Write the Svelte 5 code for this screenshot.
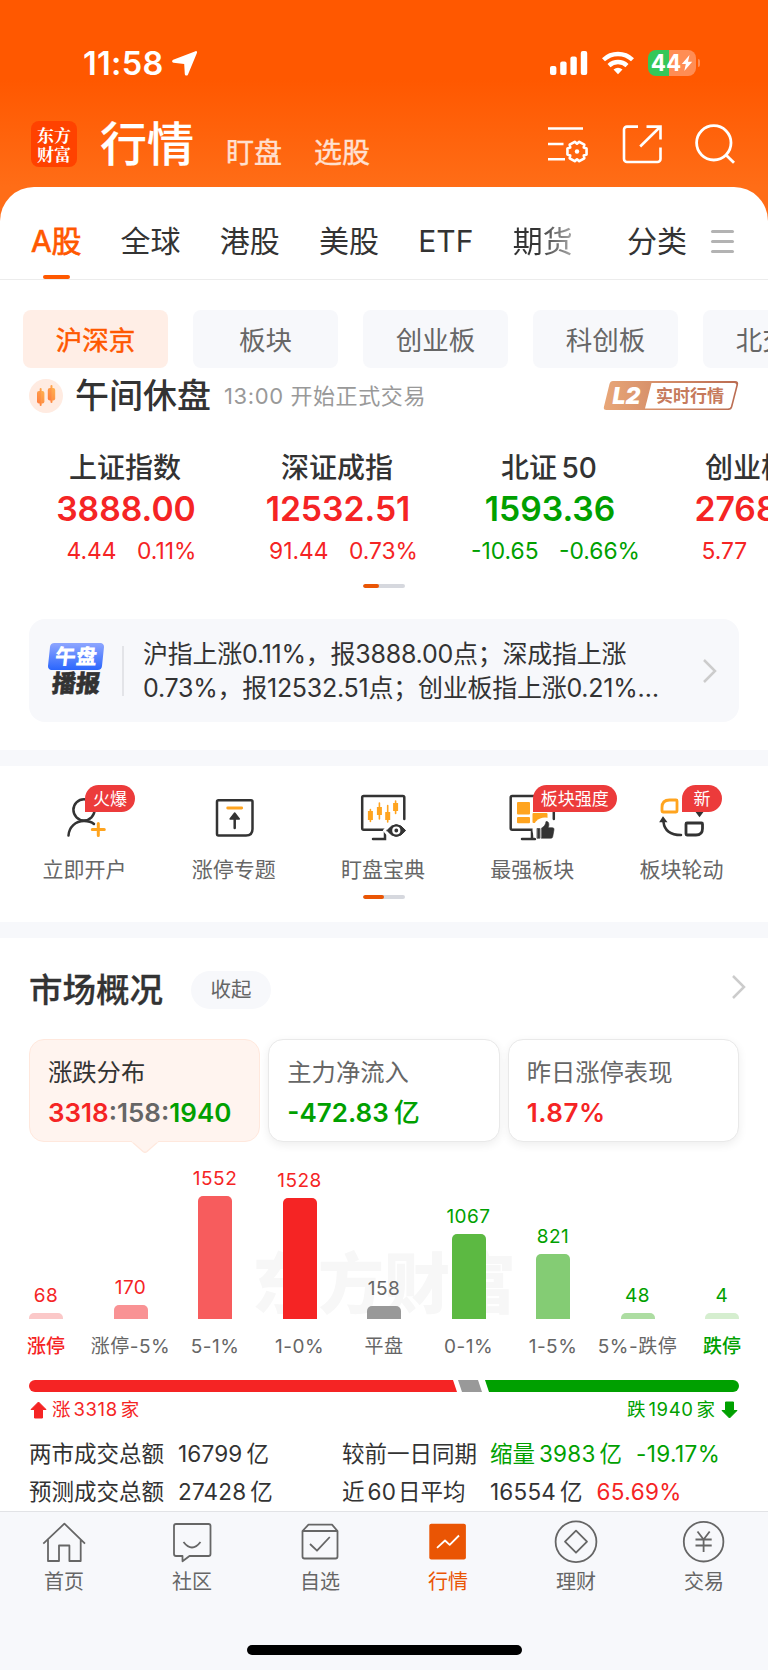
<script lang="ts">
    type Trend = 'up' | 'down' | 'flat'

    const markets = ['A股', '全球', '港股', '美股', 'ETF', '期货']
    const boards = ['沪深京', '板块', '创业板', '科创板', '北交所']

    const indices: { name: string; value: string; diff: string; rate: string; trend: Trend }[] = [
        { name: '上证指数', value: '3888.00', diff: '4.44', rate: '0.11%', trend: 'up' },
        { name: '深证成指', value: '12532.51', diff: '91.44', rate: '0.73%', trend: 'up' },
        { name: '北证 50', value: '1593.36', diff: '-10.65', rate: '-0.66%', trend: 'down' },
        { name: '创业板指', value: '2768.33', diff: '5.77', rate: '0.21%', trend: 'up' }
    ]

    const shortcuts = [
        { id: 'account', label: '立即开户', badge: '火爆' },
        { id: 'limit', label: '涨停专题', badge: '' },
        { id: 'watch', label: '盯盘宝典', badge: '' },
        { id: 'strong', label: '最强板块', badge: '板块强度' },
        { id: 'rotate', label: '板块轮动', badge: '新' }
    ]

    const bars = [
        { label: '涨停', count: 68, height: 6, color: '#fbc8c8', trend: 'up', edge: true },
        { label: '涨停-5%', count: 170, height: 14, color: '#f99294', trend: 'up' },
        { label: '5-1%', count: 1552, height: 123, color: '#f75c5d', trend: 'up' },
        { label: '1-0%', count: 1528, height: 121, color: '#f52424', trend: 'up' },
        { label: '平盘', count: 158, height: 13, color: '#999999', trend: 'flat' },
        { label: '0-1%', count: 1067, height: 85, color: '#5cb942', trend: 'down' },
        { label: '1-5%', count: 821, height: 65, color: '#84cc74', trend: 'down' },
        { label: '5%-跌停', count: 48, height: 6, color: '#addda2', trend: 'down' },
        { label: '跌停', count: 4, height: 6, color: '#d5eecf', trend: 'down', edge: true }
    ]

    const tabs = [
        { id: 'home', label: '首页' },
        { id: 'community', label: '社区' },
        { id: 'favorites', label: '自选' },
        { id: 'quotes', label: '行情' },
        { id: 'wealth', label: '理财' },
        { id: 'trade', label: '交易' }
    ]

    let market = $state('A股')
    let board = $state('沪深京')
    let tab = $state('quotes')

    // six-lobed outline around (cx, cy)
    function gear(cx: number, cy: number) {
        const at = (deg: number, r: number) => {
            const a = (deg * Math.PI) / 180
            return `${(cx + r * Math.cos(a)).toFixed(2)} ${(cy + r * Math.sin(a)).toFixed(2)}`
        }
        const points = []
        for (let mid = 0; mid < 360; mid += 60) {
            points.push(at(mid - 17, 10), at(mid + 17, 10), at(mid + 30, 7.8))
        }
        return `M${points.join('L')}Z`
    }
</script>

<div class="app">
    <div class="status">
        <div class="clock">
            <span>11:58</span>
            <svg width="27" height="27" viewBox="0 0 27 27"><path d="M24.5 1.2c1-.4 1.9.5 1.5 1.5L17 24.4c-.7 1.7-3 1.6-3.2-.3L13.2 14 2.5 12.8c-1.7-.2-1.9-2.4-.3-3z" fill="#fff" /></svg>
        </div>
        <div class="signals">
            <svg width="38" height="24" viewBox="0 0 38 24" fill="#fff">
                <rect x="0" y="15" width="6.4" height="9" rx="2" />
                <rect x="10.2" y="10.5" width="6.4" height="13.5" rx="2" />
                <rect x="20.4" y="5.5" width="6.4" height="18.5" rx="2" />
                <rect x="30.8" y="0" width="6.4" height="24" rx="2" />
            </svg>
            <svg class="wifi" width="32" height="24" viewBox="0 0 32 24" fill="none" stroke="#fff" stroke-width="4.3">
                <path d="M1.5 8.8a21 21 0 0 1 29 0" />
                <path d="M7 14.6a13 13 0 0 1 18 0" />
                <path d="M11.5 18.4q4.5-3.4 9 0L16 23.2z" fill="#fff" stroke="none" />
            </svg>
            <div class="battery">
                <span>44</span>
                <svg width="12" height="18" viewBox="0 0 12 18"><path d="M8.5 1 .8 10h4L3.3 17 11.2 7.7h-4.2z" fill="#fff" /></svg>
            </div>
            <div class="nub"></div>
        </div>
    </div>

    <header class="nav">
        <div class="logo"><span>东方</span><span>财富</span></div>
        <h1>行情</h1>
        <span class="sub">盯盘</span>
        <span class="sub">选股</span>
        <div class="nav-icons">
            <svg width="42" height="40" viewBox="0 0 42 40" fill="none" stroke="#fff" stroke-width="2.6">
                <path d="M1 4.5h35M1 20h15.5M1 35.2h17" />
                <path d={gear(30, 27.5)} stroke-linejoin="round" />
                <circle cx="30" cy="27.5" r="2.2" fill="#fff" stroke="none" />
            </svg>
            <svg width="40" height="40" viewBox="0 0 40 40" fill="none" stroke="#fff" stroke-width="2.6">
                <path d="M16 2.6H5a3 3 0 0 0-3 3V35a3 3 0 0 0 3 3h30.5a3 3 0 0 0 3-3V23.5M24.5 2.6h14v13M38 3 18.2 22.5" />
            </svg>
            <svg width="40" height="40" viewBox="0 0 40 40" fill="none" stroke="#fff" stroke-width="2.8">
                <circle cx="18.8" cy="18.8" r="17.2" />
                <path d="m30.5 30.5 8.5 8.3" />
            </svg>
        </div>
    </header>

    <main class="sheet">
        <nav class="markets">
            {#each markets as name}
                <button class="market" class:active={market === name} class:fading={name === '期货'} onclick={() => (market = name)}>{name}</button>
            {/each}
            <button class="market all">分类</button>
            <div class="burger"><i></i><i></i><i></i></div>
        </nav>

        <div class="boards">
            {#each boards as name}
                <button class="board" class:active={board === name} onclick={() => (board = name)}>{name}</button>
            {/each}
        </div>

        <div class="session">
            <svg width="34" height="34" viewBox="0 0 34 34">
                <defs>
                    <linearGradient id="candle" x1="0" y1="1" x2="1" y2="0">
                        <stop offset="0" stop-color="#ff7a3d" />
                        <stop offset="1" stop-color="#ffb350" />
                    </linearGradient>
                </defs>
                <circle cx="17" cy="17" r="17" fill="#ffebe1" />
                <g fill="url(#candle)">
                    <rect x="8" y="12" width="7.4" height="12.5" rx="2" />
                    <rect x="10.7" y="9" width="2" height="18" rx="1" />
                    <rect x="18.8" y="9" width="7.4" height="12.5" rx="2" />
                    <rect x="21.5" y="6" width="2" height="18" rx="1" />
                </g>
            </svg>
            <h2>午间休盘</h2>
            <span class="hint">13:00 开始正式交易</span>
            <svg class="level2" width="136" height="31" viewBox="0 0 136 31">
                <defs>
                    <linearGradient id="copper">
                        <stop offset="0" stop-color="#e8a678" />
                        <stop offset="1" stop-color="#ba6c52" />
                    </linearGradient>
                </defs>
                <path d="M10 1h122q4 0 3 4l-5.5 21.5q-.8 3.500-4 3.500H3.500Q0 30 1 26.500L6.500 4Q7.300 1 10 1z" fill="url(#copper)" />
                <path d="M48.500 3H131q2.800 0 2.200 2.600l-5.300 20.600q-.6 2.200-3 2.200H42z" fill="#fff" />
                <text x="9.500" y="23.500" class="l2">L2</text>
                <text x="53" y="22" class="l2-text">实时行情</text>
            </svg>
        </div>

        <div class="indices">
            {#each indices as item}
                <div class="index {item.trend}">
                    <div class="index-name">{item.name}</div>
                    <div class="index-value">{item.value}</div>
                    <div class="index-diff"><span>{item.diff}</span><span>{item.rate}</span></div>
                </div>
            {/each}
        </div>
        <div class="pager"><i></i></div>

        <div class="news">
            <div class="news-logo">
                <b>午盘</b>
                <strong>播报</strong>
            </div>
            <div class="news-rule"></div>
            <p><span>沪指上涨0.11%，报3888.00点；深成指上涨</span><span>0.73%，报12532.51点；创业板指上涨0.21%…</span></p>
            <svg class="chevron" width="14" height="24" viewBox="0 0 14 24"><path d="M1 1 12 12 1 23" /></svg>
        </div>

        <div class="band"></div>

        <div class="shortcuts">
            {#each shortcuts as s}
                <div class="shortcut">
                    <div class="shortcut-icon">
                        <svg width="60" height="48" viewBox="0 0 60 48" fill="none" stroke="#333" stroke-width="2.5" stroke-linecap="round">
                            {#if s.id === 'account'}
                                <circle cx="29" cy="15.8" r="10.6" />
                                <path d="M13.5 41.5C14 33 20.5 27 29 27q6.5 0 10 3" />
                                <path d="M43.3 29.5v12M37.3 35.5h12" stroke="#ffa41f" stroke-width="3" />
                            {:else if s.id === 'limit'}
                                <path d="M14.5 6.3h32.5q1.500 0 1.500 1.500V35q0 6.500-6.500 6.500H14.500q-1.500 0-1.500-1.500V7.800q0-1.500 1.500-1.500z" />
                                <path d="M23.700 14h14" stroke="#ffa41f" stroke-width="2.8" />
                                <path d="M30.700 34V22" />
                                <path d="m30.700 19 4.600 6h-9.200z" fill="#333" stroke-width="1.5" stroke-linejoin="round" />
                            {:else if s.id === 'watch'}
                                <path d="M51.300 25V3.500q0-1.500-1.500-1.500H10.700Q9.200 2 9.200 3.500v30.700q0 1.500 1.500 1.500H34M20 45h12V36" />
                                <g stroke="#ffa41f" stroke-width="1.6">
                                    <path d="M17.400 15.500v12M26.400 9v16M34.700 11.500V28M42.600 7v12.500" />
                                    <path d="M17.400 19.500v4M26.400 15.500v3M34.700 20.500v3M42.600 11.500v3" stroke-width="5" stroke-linecap="square" />
                                </g>
                                <path d="M33.500 36.500q9.800-13 19.600 0-9.800 13-19.600 0z" fill="#333" stroke="#fff" stroke-width="6" />
                                <path d="M34 36.500q9.300-12 18.600 0-9.300 12-18.600 0z" fill="#333" stroke-width="1" />
                                <circle cx="43.3" cy="36.5" r="3" stroke="#fff" stroke-width="2.2" />
                            {:else if s.id === 'strong'}
                                <path d="M51.800 25V3.500q0-1.500-1.500-1.500H10.200Q8.700 2 8.700 3.500v30.700q0 1.500 1.500 1.500H32M20 45h13M30 36v9" />
                                <g fill="#ffa41f" stroke="none">
                                    <rect x="15" y="8" width="13" height="12.5" rx="1" />
                                    <rect x="15" y="23" width="13" height="6.2" rx="1" />
                                    <rect x="30.5" y="19" width="15" height="10" rx="1" />
                                </g>
                                <circle cx="43" cy="36" r="12.5" fill="#fff" stroke="none" />
                                <path d="M35.300 34.500h2.500v9.800h-2.500zM39.500 34.200c3-2 4.200-3.700 4.500-6.700 3-.5 3.400 3 2.300 6.200h4.200q1.800 0 1.500 2l-1.300 7q-.3 1.500-1.800 1.500h-9.400z" fill="#333" stroke="#333" stroke-width=".6" />
                            {:else}
                                <path d="M18.500 6H25q1 0 1 1v10q0 1-1 1H12q-1 0-1-1v-3.500Q11 6 18.500 6z" stroke="#ffa41f" stroke-width="2.8" />
                                <path d="M36 29H50.500q1 0 1 1v4.500q0 6.500-6.500 6.500H36q-1 0-1-1V30q0-1 1-1z" stroke-width="2.8" />
                                <path d="M12.500 28C13.500 36.500 20 41 30 41" />
                                <path d="m12 23.500 3 4H9.500z" fill="#333" stroke-width="1.5" />
                                <path d="M48.500 10v10" />
                                <path d="m48.500 22 3-4h-6z" fill="#333" stroke-width="1.5" />
                            {/if}
                        </svg>
                        {#if s.badge}<span class="badge">{s.badge}</span>{/if}
                    </div>
                    <div class="shortcut-label">{s.label}</div>
                </div>
            {/each}
        </div>
        <div class="pager half"><i></i></div>

        <div class="band second"></div>

        <section class="overview">
            <div class="overview-head">
                <h2>市场概况</h2>
                <button class="fold">收起</button>
                <svg class="chevron" width="14" height="24" viewBox="0 0 14 24"><path d="M1 1 12 12 1 23" /></svg>
            </div>

            <div class="cards">
                <div class="card selected">
                    <div class="card-title">涨跌分布</div>
                    <div class="card-value"><span class="up">3318</span><span class="flat">:158:</span><span class="down">1940</span></div>
                    <svg class="pointer" width="28" height="13" viewBox="0 0 28 13"><path d="M0 0 12 10.5q2 1.500 4 0L28 0" fill="#fff4ef" stroke="#ffe8dd" stroke-width="1.3" /><path d="M1 0h26" stroke="#fff4ef" stroke-width="3" /></svg>
                </div>
                <div class="card">
                    <div class="card-title">主力净流入</div>
                    <div class="card-value down">-472.83<span class="unit">亿</span></div>
                </div>
                <div class="card">
                    <div class="card-title">昨日涨停表现</div>
                    <div class="card-value wide up">1.87%</div>
                </div>
            </div>

            <div class="chart">
                <div class="watermark">东方财富</div>
                {#each bars as bar}
                    <div class="col {bar.trend}">
                        <span>{bar.count}</span>
                        <div class="bar" style="height: {bar.height}px; background: {bar.color}"></div>
                    </div>
                {/each}
            </div>
            <div class="axis">
                {#each bars as bar}
                    <div class="col {bar.edge ? bar.trend : 'flat'}" class:edge={bar.edge}>{bar.label}</div>
                {/each}
            </div>

            <div class="split"><i class="s-up"></i><i class="s-flat"></i><i class="s-down"></i></div>
            <div class="split-labels">
                <span class="up">
                    <svg width="17" height="18" viewBox="0 0 17 18"><path d="M8.5 1 16 8.5h-3.5V17H4.5V8.5H1z" fill="#f52424" stroke="#f52424" stroke-linejoin="round" /></svg>
                    涨<em>3318</em>家
                </span>
                <span class="down">
                    跌<em>1940</em>家
                    <svg width="17" height="18" viewBox="0 0 17 18"><path d="M8.5 17 1 9.5h3.5V1h8v8.5H16z" fill="#00a000" stroke="#00a000" stroke-linejoin="round" /></svg>
                </span>
            </div>

            <div class="stats">
                <span>两市成交总额</span>
                <span><em>16799</em>亿</span>
                <span>较前一日同期</span>
                <span class="down">缩量<em class="lead">3983</em>亿<em class="rate">-19.17%</em></span>
                <span>预测成交总额</span>
                <span><em>27428</em>亿</span>
                <span>近<em class="days">60</em>日平均</span>
                <span><em>16554</em>亿<em class="rate up">65.69%</em></span>
            </div>
        </section>
    </main>

    <footer>
        <div class="tabbar">
            {#each tabs as t}
                <button class="tab" class:active={tab === t.id} onclick={() => (tab = t.id)}>
                    <svg width="44" height="44" viewBox="0 0 44 44" fill="none" stroke="#666" stroke-width="1.8" stroke-linejoin="round">
                        {#if t.id === 'home'}
                            <path d="M1.3 23.7 22.4 3.7 43 23.7M6 19.5V41h11V25.5h10.4V41h11.3V19.5" />
                        {:else if t.id === 'community'}
                            <path d="M6 4h32.5q2 0 2 2v28q0 2-2 2H19.5L12.5 41.2V36H6q-2 0-2-2V6q0-2 2-2z" />
                            <path d="M13.5 22q8.5 11 17 0" />
                        {:else if t.id === 'favorites'}
                            <path d="M4.5 11v25.5q0 2 2 2h31q2 0 2-2V11L34 4.6H10.5zM4.5 11h35" />
                            <path d="m12 24 7 6.7L31.8 17" />
                        {:else if t.id === 'quotes'}
                            <rect x="3.3" y="3.7" width="36.6" height="35.8" rx="2" fill="#ea5504" stroke="none" />
                            <path d="m11 27.8 8-7.3 4.7 4.3 9.3-9.3" stroke="#fff" />
                        {:else if t.id === 'wealth'}
                            <circle cx="22" cy="21.7" r="20.4" />
                            <path d="M22 10.7 33 21.7 22 32.7 11 21.7z" />
                        {:else}
                            <circle cx="21.6" cy="21.7" r="19.8" />
                            <path d="m15.5 11.5 6.1 8 6.1-8M21.6 19.5V32M13.5 19.5h16.2M13.5 25.5h16.2" />
                        {/if}
                    </svg>
                    <span>{t.label}</span>
                </button>
            {/each}
        </div>
        <div class="home-bar"></div>
    </footer>
</div>

<style>
    :global(body) {
        margin: 0;
        background: #fff;
    }

    .app {
        width: 768px;
        height: 1670px;
        overflow: hidden;
        display: flex;
        flex-direction: column;
        font-family: Inter, "Noto Sans CJK SC", sans-serif;
        color: #333;
        white-space: nowrap;
        background: linear-gradient(#ff5800 0, #ff5800 80px, #ff6d17 187px, #ff6d17 240px, #fff 241px);
    }

    button {
        border: 0;
        padding: 0;
        background: none;
        font: inherit;
        color: inherit;
    }

    h1, h2, p { margin: 0; }
    em, i { font-style: normal; }
    svg { display: block; flex-shrink: 0; }

    .up { color: #f52424; }
    .down { color: #00a000; }
    .flat { color: #666; }

    .status {
        display: flex;
        justify-content: space-between;
        align-items: center;
        height: 74px;
        padding: 26px 68px 0 83px;
        color: #fff;
    }

    .clock {
        display: flex;
        align-items: center;
        gap: 7px;
        font-size: 32.5px;
        font-weight: 600;
        letter-spacing: .3px;
    }

    .signals { display: flex; align-items: center; }
    .wifi { margin-left: 14px; }

    .battery {
        display: flex;
        align-items: center;
        justify-content: center;
        width: 48px;
        height: 26px;
        margin-left: 14px;
        border-radius: 8px;
        background: linear-gradient(90deg, #34c759 44%, #ff8d54 44%);
        font-size: 22.5px;
        font-weight: 700;
        line-height: 26px;
    }

    .nub {
        width: 2px;
        height: 8px;
        margin-left: 2px;
        border-radius: 0 3px 3px 0;
        background: #ff8d54;
    }

    .nav {
        display: flex;
        align-items: center;
        height: 87px;
        padding: 0 33px 0 31px;
        color: #fff;
    }

    .logo {
        display: flex;
        flex-direction: column;
        justify-content: center;
        align-items: center;
        width: 46px;
        height: 46px;
        border-radius: 8px;
        background: #ff4200;
        font-family: "Noto Serif CJK SC", "Noto Sans CJK SC", sans-serif;
        font-size: 17px;
        font-weight: 700;
        line-height: 19px;
    }

    h1 {
        margin-left: 23px;
        font-size: 47px;
        line-height: 60px;
        font-weight: 500;
        -webkit-text-stroke: .2px #fff;
    }

    .sub {
        margin: 18px 0 0 32px;
        font-size: 28px;
        line-height: 34px;
        color: #ffe0d0;
        -webkit-text-stroke: .4px #ffe0d0;
    }

    .nav-icons {
        display: flex;
        align-items: center;
        gap: 33px;
        margin-left: auto;
    }

    .sheet {
        display: flex;
        flex-direction: column;
        flex: 1;
        min-height: 0;
        border-radius: 34px 34px 0 0;
        background: #fff;
        overflow: hidden;
    }

    .markets {
        display: flex;
        align-items: center;
        box-sizing: border-box;
        flex-shrink: 0;
        height: 93px;
        padding: 17px 34px 0 31px;
        border-bottom: 1px solid #ececec;
    }

    .market {
        position: relative;
        height: 75px;
        margin-right: 39.3px;
        font-size: 30px;
        line-height: 75px;
    }

    .market.active {
        color: #ff5800;
        letter-spacing: -.3px;
        -webkit-text-stroke: .7px #ff5800;
    }

    .market.active::after {
        content: '';
        position: absolute;
        left: 12px;
        bottom: 0;
        width: 27px;
        height: 4px;
        border-radius: 2px;
        background: #ff5800;
    }

    .market.fading {
        color: transparent;
        background: linear-gradient(90deg, #333 40%, #aaa);
        background-clip: text;
        -webkit-background-clip: text;
    }

    .market.all { margin: 0 24px 0 auto; }

    .burger {
        display: flex;
        flex-direction: column;
        gap: 7px;
    }

    .burger i {
        width: 23px;
        height: 3px;
        border-radius: 1.5px;
        background: #b3b3b3;
    }

    .boards {
        display: flex;
        gap: 25px;
        padding: 30px 0 0 23px;
    }

    .board {
        flex: 0 0 145px;
        height: 58px;
        border-radius: 8px;
        background: #f7f8fb;
        font-size: 26.5px;
        line-height: 60px;
        color: #666;
    }

    .board.active {
        background: #ffeee6;
        color: #ff5800;
        -webkit-text-stroke: .5px #ff5800;
    }

    .session {
        display: flex;
        align-items: center;
        height: 55px;
        padding: 0 29px;
    }

    .session h2 {
        margin-left: 12px;
        font-size: 34px;
        line-height: 56px;
        font-weight: 500;
    }

    .hint {
        margin: -4px 0 0 13px;
        font-size: 22px;
        color: #999;
        letter-spacing: .6px;
    }

    .level2 { margin-left: auto; }

    .l2 {
        font-size: 23px;
        font-weight: 900;
        font-style: italic;
        fill: #fff;
    }

    .l2-text {
        font-size: 17px;
        font-weight: 700;
        fill: #c67a5c;
    }

    .indices {
        display: flex;
        padding: 25px 0 0 20px;
    }

    .index {
        flex: 0 0 212px;
        text-align: center;
    }

    .index-name {
        padding-right: 2px;
        font-size: 28px;
        line-height: 40px;
        font-weight: 500;
        word-spacing: -3px;
        color: #333;
    }

    .index-value {
        font-size: 33.7px;
        font-weight: 600;
        line-height: 41px;
    }

    .index-diff {
        display: flex;
        justify-content: center;
        gap: 20.5px;
        padding-left: 11px;
        font-size: 22.8px;
        line-height: 43px;
    }

    .pager {
        flex-shrink: 0;
        width: 42px;
        height: 4px;
        margin: 12px auto 0;
        border-radius: 2px;
        background: #d6d8de;
        overflow: hidden;
    }

    .pager i {
        display: block;
        width: 16px;
        height: 4px;
        border-radius: 2px;
        background: #ea5504;
    }

    .pager.half { margin-top: 10px; }
    .pager.half i { width: 21px; }

    .news {
        display: flex;
        align-items: center;
        height: 103px;
        margin: 31px 29px 28px;
        border-radius: 16px;
        background: #f7f8fb;
    }

    .news-logo {
        display: flex;
        flex-direction: column;
        width: 54px;
        margin-left: 20px;
    }

    .news-logo b {
        height: 27px;
        border-radius: 4px;
        background: linear-gradient(#8ea6ff, #2b66fd);
        transform: skewX(-6deg);
        color: #fff;
        font-size: 21px;
        font-weight: 900;
        line-height: 27px;
        text-align: center;
    }

    .news-logo strong {
        font-size: 24px;
        font-weight: 900;
        line-height: 28px;
        text-align: center;
        transform: skewX(-6deg);
        -webkit-text-stroke: .5px #333;
    }

    .news-rule {
        width: 2px;
        height: 50px;
        margin: 0 19px 0 19px;
        background: #e3e4e8;
    }

    .news p {
        display: flex;
        flex-direction: column;
        padding-top: 1px;
        font-size: 25px;
        line-height: 34px;
        letter-spacing: -.25px;
    }

    .news .chevron { margin: 0 22px 0 auto; }

    .chevron path {
        fill: none;
        stroke: #ccc;
        stroke-width: 2.5;
    }

    .band {
        flex-shrink: 0;
        height: 16px;
        background: #f7f8fb;
    }

    .band.second { margin-top: 23px; }

    .shortcuts {
        display: flex;
        padding: 28px 12px 0 10px;
    }

    .shortcut {
        flex: 1;
        display: flex;
        flex-direction: column;
        align-items: center;
    }

    .shortcut-icon { position: relative; }

    .badge {
        position: absolute;
        left: 30.5px;
        top: -9.5px;
        min-width: 24px;
        height: 27px;
        padding: 0 8px;
        border-radius: 14px 14px 14px 0;
        background: #ec3b3b;
        color: #fff;
        font-size: 17px;
        line-height: 28px;
        text-align: center;
    }

    .shortcut-label {
        margin-top: 13px;
        font-size: 21px;
        line-height: 30px;
        color: #666;
    }

    .overview { padding: 0 29px; }

    .overview-head {
        display: flex;
        align-items: center;
        height: 98px;
        padding-top: 3px;
    }

    .overview-head h2 {
        font-size: 33.5px;
        line-height: 50px;
        font-weight: 500;
        -webkit-text-stroke: .3px #333;
    }

    .fold {
        width: 80px;
        height: 38px;
        margin-left: 28px;
        border-radius: 19px;
        background: #f7f8fb;
        font-size: 20.5px;
        line-height: 38px;
        color: #666;
    }

    .overview-head .chevron { margin: -6px -7px 0 auto; }

    .cards {
        display: flex;
        gap: 8px;
    }

    .card {
        position: relative;
        flex: 1;
        box-sizing: border-box;
        height: 103px;
        padding: 12px 18px 0;
        border: 1px solid #e9e9e9;
        border-radius: 15px;
        background: #fff;
        box-shadow: 0 3px 10px rgba(0, 0, 0, .07);
    }

    .card.selected {
        border-color: #ffe8dd;
        background: #fff4ef;
        box-shadow: none;
    }

    .card-title {
        font-size: 24.3px;
        line-height: 40px;
        color: #666;
    }

    .selected .card-title { color: #333; }

    .card-value {
        font-size: 26px;
        font-weight: 600;
        line-height: 42px;
    }

    .card-value.wide { letter-spacing: .5px; }

    .unit {
        margin-left: 5px;
        font-weight: 500;
    }

    .pointer {
        position: absolute;
        left: 101px;
        top: 101px;
    }

    .chart {
        position: relative;
        display: flex;
        justify-content: space-between;
        align-items: flex-end;
        height: 177px;
    }

    .watermark {
        position: absolute;
        left: 223px;
        bottom: 0;
        font-size: 66px;
        font-weight: 900;
        line-height: 70px;
        color: #f7f7f7;
    }

    .col {
        position: relative;
        display: flex;
        flex-direction: column;
        align-items: center;
        width: 34px;
        font-size: 19px;
        letter-spacing: .5px;
    }

    .col span {
        line-height: 24px;
        margin-bottom: 5px;
    }

    .bar {
        width: 34px;
        border-radius: 5px 5px 0 0;
    }

    .axis {
        display: flex;
        justify-content: space-between;
        margin-top: 13px;
        line-height: 30px;
    }

    .axis .edge { font-weight: 500; letter-spacing: 0; }

    .split {
        display: flex;
        gap: 1px;
        height: 12px;
        margin-top: 18px;
        border-radius: 6px;
        overflow: hidden;
    }

    .s-up {
        width: 428px;
        background: #f52424;
        clip-path: polygon(0 0, calc(100% - 4px) 0, 100% 100%, 0 100%);
    }

    .s-flat {
        width: 24px;
        background: #999;
        clip-path: polygon(0 0, calc(100% - 4px) 0, 100% 100%, 4px 100%);
    }

    .s-down {
        flex: 1;
        background: #00a000;
        margin-left: 2px;
        clip-path: polygon(0 0, 100% 0, 100% 100%, 4px 100%);
    }

    .split-labels {
        display: flex;
        justify-content: space-between;
        height: 35px;
        font-size: 18.5px;
        line-height: 35px;
    }

    .split-labels span {
        display: flex;
        align-items: center;
        padding: 0 1px;
    }

    .split-labels em { margin: 0 3px; letter-spacing: .6px; }
    .split-labels .up svg { margin-right: 5px; }
    .split-labels .down svg { margin-left: 6px; }

    .stats {
        display: grid;
        grid-template-columns: 149px 164px 148px 1fr;
        grid-auto-rows: 38px;
        margin-top: 8px;
        font-size: 22.5px;
        line-height: 38px;
    }

    .stats em { margin-right: 4px; letter-spacing: .2px; }
    .stats .lead { margin-left: 4px; }
    .stats .days { margin: 0 2px 0 3px; }
    .stats .rate { margin: 0 0 0 14px; letter-spacing: .4px; }

    footer {
        flex-shrink: 0;
        box-sizing: border-box;
        height: 159px;
        border-top: 1px solid #e2e3e6;
        background: #f7f8fb;
    }

    .tabbar {
        display: flex;
        padding-top: 8px;
    }

    .tab {
        flex: 1;
        display: flex;
        flex-direction: column;
        align-items: center;
        gap: 3px;
        font-size: 20px;
        line-height: 30px;
        color: #666;
    }

    .tab.active { color: #ea5504; }

    .home-bar {
        width: 275px;
        height: 10px;
        margin: 48px auto 0;
        border-radius: 5px;
        background: #000;
    }
</style>
